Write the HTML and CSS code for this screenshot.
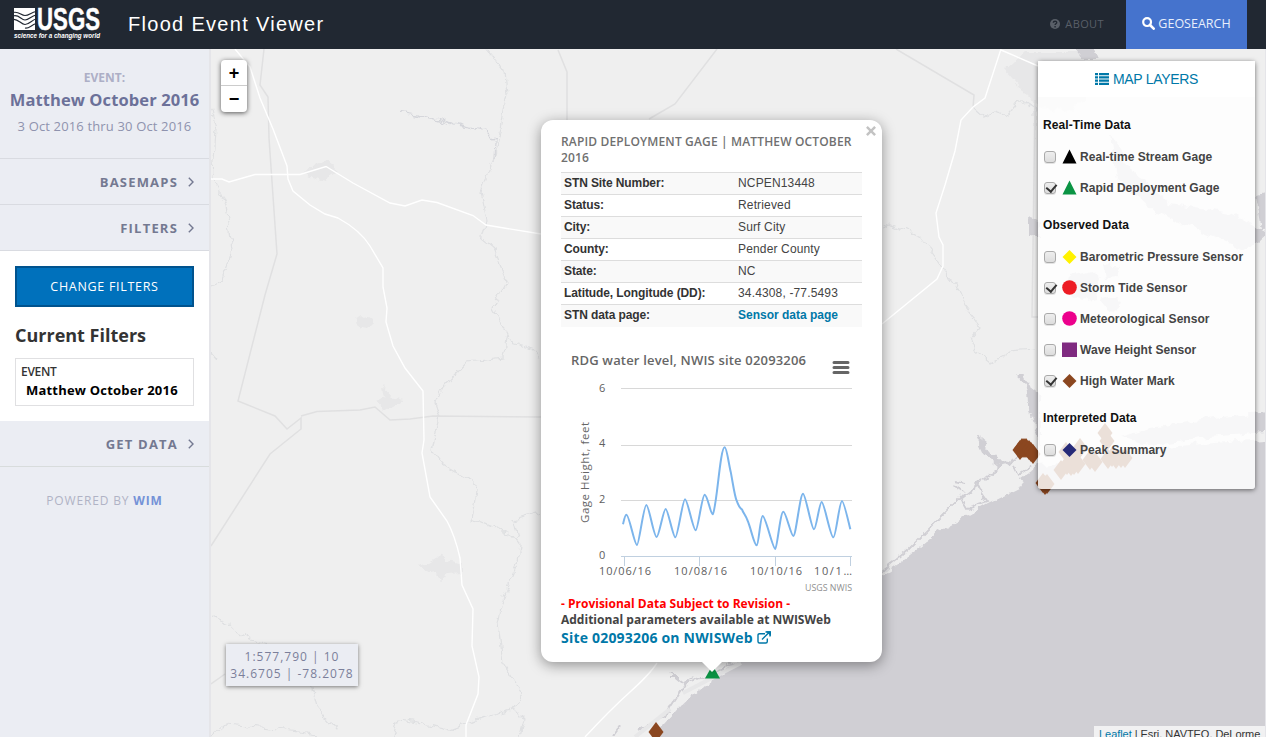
FILE: index.html
```html
<!DOCTYPE html>
<html lang="en">
<head>
<meta charset="utf-8">
<title>Flood Event Viewer</title>
<link rel="stylesheet" href="styles.css">
</head>
<body>
<header class="navbar">
  <svg class="logo" width="88" height="34" viewBox="0 0 88 34">
    <path class="logo-fill" d="M1 1h21v22H1z"/>
    <path class="logo-wave" d="M0 5.500c6-1.500 8 3 12 3s6-3 11-4M0 9c6-2 8 4 12 4s6-4 11-5M0 12.500c5-1 8 5 12 5s7-4.500 11-5.500M12 21c4 1 6-3 11-4.500"/>
    <text class="logo-name" x="24" y="23" textLength="63" lengthAdjust="spacingAndGlyphs">USGS</text>
    <text class="logo-tag" x="1" y="30.5" textLength="86" lengthAdjust="spacingAndGlyphs">science for a changing world</text>
  </svg>
  <h1 class="brand">Flood Event Viewer</h1>
  <nav class="nav">
    <a class="about"><svg width="10" height="10" viewBox="0 0 10 10"><circle cx="5" cy="5" r="5" fill="#595f68"/><path d="M3.3 3.8C3.4 1.6 6.8 1.7 6.7 3.7C6.6 4.8 5.2 4.8 5.1 6M5.1 7v1.4" fill="none" stroke="#212832" stroke-width="1.4"/></svg><span>ABOUT</span></a>
    <a class="geosearch"><svg width="13" height="13" viewBox="0 0 13 13"><circle cx="5.1" cy="5.1" r="3.9" fill="none" stroke="#fff" stroke-width="2.2"/><path d="M8 8l3.7 3.7" stroke="#fff" stroke-width="2.6" stroke-linecap="round"/></svg><span>GEOSEARCH</span></a>
  </nav>
</header>
<div class="main">
  <aside class="sidebar">
    <section class="event">
      <div class="event-label">EVENT:</div>
      <div class="event-name">Matthew October 2016</div>
      <div class="event-dates">3 Oct 2016 thru 30 Oct 2016</div>
    </section>
    <div class="menu-item"><span>BASEMAPS</span><svg width="6" height="10" viewBox="0 0 6 10"><path d="M.8.8L5 5 .8 9.2"/></svg></div>
    <div class="menu-item"><span>FILTERS</span><svg width="6" height="10" viewBox="0 0 6 10"><path d="M.8.8L5 5 .8 9.2"/></svg></div>
    <section class="filters">
      <button class="change">CHANGE FILTERS</button>
      <h2 class="current">Current Filters</h2>
      <div class="filter-box"><div class="filter-key">EVENT</div><div class="filter-value">Matthew October 2016</div></div>
    </section>
    <div class="menu-item last"><span>GET DATA</span><svg width="6" height="10" viewBox="0 0 6 10"><path d="M.8.8L5 5 .8 9.2"/></svg></div>
    <div class="powered">POWERED BY <b>WIM</b></div>
  </aside>
  <main class="map">
    <svg class="basemap" width="1054" height="688" viewBox="211 49 1054 688">
      <defs>
        <filter id="rough" x="-5%" y="-5%" width="110%" height="110%"><feTurbulence type="fractalNoise" baseFrequency=".09" numOctaves="3" seed="4"/><feDisplacementMap in="SourceGraphic" scale="10" xChannelSelector="R" yChannelSelector="G"/></filter>
        <path id="hwm" d="M0-10L7.500 0 0 10-7.500 0z"/>
      </defs>
      <g class="urban" filter="url(#rough)">
        <path d="M305 174l12-13 12 1 9 7 -9 6 -4 7 -15-5zM357 318l6-4 7 3 4 6 -7 7 -9-2zM376 402l8-4 -2-12 9 10 12 4 -11 6 -8 5zM417 565l12-3 12-7 8 5 13 4v10l-14 1 -8 5 -12-9zM1005 70l20-18h60v50l-20 10 -30-5 -15-20z"/>
      </g>
      <g class="river" filter="url(#rough)">
        <path d="M487 50L505 72 507 94 500 133 495 155 480 192 486 221 482 238 493 247 507 282 493 308 507 335 503 357 467 361 443 387 435 403 440 418 432 449 443 464 477 484 472 519 510 534 520 545 518 563 502 602 498 624 503 663 522 694 513 709"/>
        <path class="water-line" d="M400 112L440 120 455 126 485 130 495 140 494 158M401 113L420 115 445 122 482 131"/>
        <path d="M210 105L216 130 213 176 225 205 232 250 222 280 211 285M540 512L514 520 518 538M507 341L533 348 540 357M211 617L230 625 250 640 275 645M310 680L317 707 340 733M393 737L398 720 430 725 450 730 490 715 513 709 524 720 520 737M211 737L225 724 270 728 320 735"/>
        <path d="M882 228L890 223 920 236 936 258 945 272 955 285 965 307 980 327 970 338 975 350 990 362 1010 352 1035 350M975 110L983 117 995 112 1007 116 1020 100 1035 110 1035 140M211 352L218 360"/>
      </g>
      <g class="county">
        <path d="M264 49L260 85 268 97 269 138 277 254 265 295 238 401 275 416 287 429 301 418V429L270 454 211 546M301 416L317 411.500 360 410 375 407 390 420 410 419 433 416 541 417M558 50L567 72V120M717 49L675 104 649 119M896 49L974 95 973 108M1035 100L1032 317H1038M211 684L225 674"/>
      </g>
      <g class="road">
        <path d="M235 49L250 67 260 98 273 129 287 166 288 179 293 191 310 205 325 214 338 218Q360 230 370 246L383 268V287L387 308 386 322 393 346 405 368 423 391 424 440 422 453 Q427 480 430 497L447 521Q455 536 460 558L462 585 473 609 472 646 479 677 478 694 466 725V737"/>
        <path d="M211 179H222L229 182 255 174.500H300L326 166.500 353 183 390 203 405 206 422 200 437 202.500 473 215.500 486 225 541 234"/>
        <path d="M1001 49L985 98 973 107 961 120 955 151 945 185 936 213 939 237 943 245V266L937 279 882 324M1001 50L1038 66M585 737Q610 710 630 692T657 663"/>
      </g>
      <g filter="url(#rough)" class="water">
        <path d="M645 745L683 703 735 664 882 575 905 559 937 533 967 516 988 504 1023 487 1020 478 1039 465 1075 462 1130 450 1275 438V745z"/>
        <path d="M1016 375L1026 384 1030 405 1035 430 1040 445V395L1030 387 1024 375zM976 436L985 443 990 450 1003 464 1015 459 1009 466 999 467 985 455zM1120 437L1150 428 1200 420 1275 410V431L1200 438 1150 446zM1256 195L1275 190V229L1262 230zM1075 49H1095L1099 59H1083zM1028 218L1040 222 1039 237 1028 236z"/>
        <path d="M1070 275l20-5 10 8 -5 20 -12 3 -15-12zM1105 265l15 2 -3 10 -10 1zM1100 300l15-5 6 10 -10 8zM1110 135l25 40 35 28 60 10 36 20 -20 18 -90-38 -40-35z"/>
      </g>
      <g class="inlet" filter="url(#rough)">
        <path d="M882 571L908 550 960 498 1008 461 1037 449M959 495L967 509 988 502 979 489 981 480M953 485L963 492M955 481L965 483M1014 466L1018 474 1032 465M640 730L667 713 685 685 735 664M668 672L684 685 695 676M670 678L680 678M613 737L621 726"/>
      </g>
      <path class="beach" d="M635 737L670 709M683 693L741 663"/>
      <g class="marks">
        <use href="#hwm" x="1020" y="450"/><use href="#hwm" x="1022" y="448"/><use href="#hwm" x="1024" y="448"/><use href="#hwm" x="1026" y="448"/><use href="#hwm" x="1029" y="450"/><use href="#hwm" x="1031" y="452"/><use href="#hwm" x="1033" y="454"/>
        <use href="#hwm" x="1043" y="483"/><use href="#hwm" x="1045" y="485"/><use href="#hwm" x="1047" y="484"/>
        <use href="#hwm" x="1061" y="470"/><use href="#hwm" x="1066" y="452"/><use href="#hwm" x="1067" y="465"/><use href="#hwm" x="1071" y="466"/><use href="#hwm" x="1074" y="465"/><use href="#hwm" x="1078" y="464"/><use href="#hwm" x="1080" y="448"/><use href="#hwm" x="1072" y="456"/>
        <use href="#hwm" x="1090" y="460"/><use href="#hwm" x="1095" y="462"/><use href="#hwm" x="1105" y="433"/><use href="#hwm" x="1107" y="441"/><use href="#hwm" x="1108" y="459"/><use href="#hwm" x="1112" y="457"/><use href="#hwm" x="1116" y="459"/><use href="#hwm" x="1121" y="458"/><use href="#hwm" x="1125" y="458"/>
        <use href="#hwm" x="656" y="732"/>
      </g>
      <path fill="#0b9444" d="M712.500 665l7.500 13.500h-15z"/>
    </svg>
    <div class="zoom"><a>+</a><a>−</a></div>
    <div class="scale"><div>1:577,790 | 10</div><div>34.6705 | -78.2078</div></div>
    <div class="attribution"><a>Leaflet</a> | Esri, NAVTEQ, DeLorme</div>

    <section class="layers">
      <div class="layers-head"><svg width="14" height="12" viewBox="0 0 14 12"><path d="M0 0h3v2.200H0zM4 0h10v2.200H4zM0 3.200h3v2.300H0zM4 3.200h10v2.300H4zM0 6.500h3v2.300H0zM4 6.500h10v2.300H4zM0 9.800h3V12H0zM4 9.800h10V12H4z" fill="#0078a8"/></svg><span>MAP LAYERS</span></div>
      <h3>Real-Time Data</h3>
      <label><i class="check"></i><svg class="sym" viewBox="0 0 15 15"><path d="M7.500 .500L14.500 14.500H.500z"/></svg><span>Real-time Stream Gage</span></label>
      <label><i class="check on"></i><svg class="sym" viewBox="0 0 15 15"><path fill="#0b9444" d="M7.500 .500L14.500 14.500H.500z"/></svg><span>Rapid Deployment Gage</span></label>
      <h3>Observed Data</h3>
      <label><i class="check"></i><svg class="sym" viewBox="0 0 15 15"><path fill="#fff200" d="M7.500 1L14.500 8 7.500 15 .500 8z"/></svg><span>Barometric Pressure Sensor</span></label>
      <label><i class="check on"></i><svg class="sym" viewBox="0 0 15 15"><circle fill="#ed1c24" cx="7.500" cy="7.500" r="7.300"/></svg><span>Storm Tide Sensor</span></label>
      <label><i class="check"></i><svg class="sym" viewBox="0 0 15 15"><circle fill="#ec008c" cx="7.500" cy="7.500" r="7.300"/></svg><span>Meteorological Sensor</span></label>
      <label><i class="check"></i><svg class="sym" viewBox="0 0 15 15"><path fill="#7f2a80" d="M0 .500h15v14.500H0z"/></svg><span>Wave Height Sensor</span></label>
      <label><i class="check on"></i><svg class="sym" viewBox="0 0 15 15"><path fill="#8b4720" d="M7.500 1L14.500 8 7.500 15 .500 8z"/></svg><span>High Water Mark</span></label>
      <h3>Interpreted Data</h3>
      <label><i class="check"></i><svg class="sym" viewBox="0 0 15 15"><path fill="#262a78" d="M7.500 1L14.500 8 7.500 15 .500 8z"/></svg><span>Peak Summary</span></label>
    </section>

    <section class="popup">
      <svg class="close" width="10" height="10" viewBox="0 0 9 9"><path d="M.8.8l7.400 7.400M8.200 .8L.8 8.200" stroke="#c3c3c3" stroke-width="2.200"/></svg>
      <h4>RAPID DEPLOYMENT GAGE | MATTHEW OCTOBER 2016</h4>
      <table>
        <tr><th>STN Site Number:</th><td>NCPEN13448</td></tr>
        <tr><th>Status:</th><td>Retrieved</td></tr>
        <tr><th>City:</th><td>Surf City</td></tr>
        <tr><th>County:</th><td>Pender County</td></tr>
        <tr><th>State:</th><td>NC</td></tr>
        <tr><th>Latitude, Longitude (DD):</th><td>34.4308, -77.5493</td></tr>
        <tr><th>STN data page:</th><td><a>Sensor data page</a></td></tr>
      </table>
      <svg class="chart" width="301" height="269" viewBox="561 327 301 269">
        <text class="chart-title" x="571" y="365" textLength="235">RDG water level, NWIS site 02093206</text>
        <path d="M834 362.500h14M834 367.500h14M834 372.500h14" stroke="#666" stroke-width="3" stroke-linecap="round"/>
        <path d="M621 388.500h231M621 445.500h231M621 500.500h231" stroke="#d8d8d8"/>
        <path d="M621 556.500h231M624.500 556v10M699.500 556v10M775.500 556v10M850.500 556v10" stroke="#c0d0e0" fill="none"/>
        <g class="axis"><text x="599" y="392">6</text><text x="599" y="447">4</text><text x="599" y="503">2</text><text x="599" y="559">0</text>
        <text x="599" y="575" textLength="52">10/06/16</text><text x="674" y="575" textLength="53">10/08/16</text><text x="750" y="575" textLength="52">10/10/16</text><text x="814" y="575" textLength="38">10/1…</text></g>
        <text class="ytitle" transform="translate(589 523) rotate(-90)" textLength="101">Gage Height, feet</text>
        <text class="credit" x="805" y="591" textLength="47" lengthAdjust="spacingAndGlyphs">USGS NWIS</text>
        <path class="series" transform="translate(540 330) scale(.33333)" d="M249 583C252 570 255 554 259 554C268 554 283 645 291 645C297 645 311 525 319 525C327 525 341 621 350 621C357 621 370 537 377 537C384 537 399 622 406 622C413 622 428 508 435 508C443 508 459 601 467 601C474 601 486 494 494 494C502 494 512 553 518 553C530 540 540 352 554 352C560 352 566 400 572 425C578 455 584 500 590 512Q598 535 606 538C610 550 617 556 622 570C632 590 642 646 650 646C656 646 661 558 668 558C677 558 698 657 706 657C711 657 721 545 730 545C738 545 753 618 760 618C768 618 780 491 789 491C797 491 814 598 822 598C829 598 838 516 845 516C853 516 871 622 880 622C888 622 898 513 906 513Q911 513 931 598"/>
      </svg>
      <div class="prov">- Provisional Data Subject to Revision -</div>
      <div class="addl">Additional parameters available at NWISWeb</div>
      <a class="site"><span>Site 02093206 on NWISWeb</span><svg width="14" height="13" viewBox="0 0 14 13"><path d="M8 2.700H2.500Q1 2.700 1 4.200V10.500Q1 12 2.500 12H8.800Q10.300 12 10.300 10.500V7.500M5 8.500L12 1.500M8.500 1H13V5.500" fill="none" stroke="#0078a8" stroke-width="1.400"/><path d="M9 .300h5v5z" fill="#0078a8"/></svg></a>
      <div class="tip"></div>
    </section>
  </main>
</div>
</body>
</html>
```
FILE: styles.css
```css
* { box-sizing: border-box; }
body { margin: 0; height: 737px; overflow: hidden; display: flex; flex-direction: column; font-family: "Open Sans", sans-serif; }
svg { display: block; flex: none; }
h1, h2, h3, h4 { margin: 0; }

.navbar { height: 49px; flex: none; background: #212832; display: flex; align-items: center; padding-right: 19px; }
.logo { margin: 0 0 2px 13px; overflow: visible; }
.logo-fill { fill: #fff; }
.logo-wave { fill: none; stroke: #212832; stroke-width: 1.2; }
.logo-name { font: bold 31px "Liberation Sans", sans-serif; fill: #fff; stroke: #fff; stroke-width: .5px; }
.logo-tag { font: italic bold 8px "Liberation Sans", sans-serif; fill: #fff; }
.brand { margin-left: 27px; font: 20px "Liberation Sans", sans-serif; letter-spacing: 1.3px; color: #fff; white-space: nowrap; }
.nav { margin-left: auto; height: 100%; display: flex; font-size: 12px; }
.nav a { display: flex; align-items: center; gap: 5px; }
.nav .about { color: #595f68; padding-right: 22px; padding-bottom: 2px; font-size: 11px; letter-spacing: .4px; }
.nav .geosearch { width: 121px; justify-content: center; background: #4573cd; color: #e8effc; gap: 3px; padding-bottom: 2px; font-size: 12.500px; }

.main { display: flex; flex: 1; min-height: 0; }
.sidebar { width: 211px; flex: none; background: #ebedf3; border-right: 2px solid #e5e5e9; }
.event { height: 110px; border-bottom: 1px solid #d9dbe1; text-align: center; white-space: nowrap; padding-top: 20px; }
.event-label { font-size: 12px; line-height: 18px; font-weight: bold; color: #adafc6; }
.event-name { font-size: 16.500px; line-height: 25px; letter-spacing: .1px; font-weight: bold; color: #6c7199; }
.event-dates { font-size: 13px; line-height: 29px; letter-spacing: .15px; color: #8f93ae; }
.menu-item { height: 46px; border-bottom: 1px solid #d9dbe1; display: flex; align-items: center; justify-content: flex-end; gap: 10px; padding-right: 15px; color: #747991; font-size: 13px; font-weight: bold; letter-spacing: 1.2px; }
.menu-item path { fill: none; stroke: #747991; stroke-width: 1.4; }
.menu-item.last { border-bottom-color: #d8dcdc; }
.filters { height: 170px; background: #fff; padding: 15px; }
.change { display: block; width: 179px; height: 41px; border: 2px solid #00538e; background: #0071bc; color: #fff; font: 12.500px "Open Sans", sans-serif; letter-spacing: .7px; padding: 0; }
.current { font-size: 18px; line-height: 24px; color: #333; margin: 16px 0 11px; }
.filter-box { width: 179px; height: 48px; border: 1px solid #e0e0e2; padding: 4px 5px; white-space: nowrap; }
.filter-key { font-size: 12px; line-height: 18px; color: #333; font-weight: 600; letter-spacing: -.3px; }
.filter-value { font-size: 13px; line-height: 19px; letter-spacing: .2px; font-weight: bold; color: #000; padding-left: 5px; }
.powered { text-align: center; margin-top: 24px; font-size: 12px; line-height: 20px; color: #b0b3c5; letter-spacing: .85px; }
.powered b { color: #7492d7; }

.map { position: relative; flex: 1; background: #efefef; border-right: 1px solid #e5e5e9; overflow: hidden; }
.urban { fill: #e7e7e8; }
.river { fill: none; stroke: #dfe0e2; stroke-width: 1.2; }
.water-line { stroke: #d5d6db; }
.county { fill: none; stroke: #e0e0e1; stroke-width: 1.5; }
.road { fill: none; stroke: #fff; stroke-width: 1.4; }
.water { fill: #d0cfd4; }
.inlet { fill: none; stroke: #d0cfd4; stroke-width: 1.8; }
.beach { stroke: #e7e7e8; stroke-width: 4; }
.marks { fill: #8b4720; }

.zoom { position: absolute; left: 10px; top: 11px; width: 26px; border-radius: 4px; background: #fff; box-shadow: 0 1px 5px rgba(0,0,0,.65); }
.zoom a { display: block; height: 26px; text-align: center; font: bold 18px/26px "Liberation Sans", sans-serif; }
.zoom a:first-child { border-bottom: 1px solid #ccc; }
.scale { position: absolute; left: 15px; top: 595px; width: 132px; height: 42px; background: #ebedf3; box-shadow: 0 1px 4px rgba(0,0,0,.5); padding-top: 4px; text-align: center; font-size: 12px; line-height: 17px; letter-spacing: 1px; color: #7b7f9a; white-space: nowrap; }
.attribution { position: absolute; right: 0; top: 677px; width: 171px; height: 16px; padding: 0 5px; background: rgba(255,255,255,.7); font: 11px/16px "Liberation Sans", sans-serif; letter-spacing: -.05px; color: #333; white-space: nowrap; }
.attribution a { color: #0078a8; text-decoration: underline; }

.layers { position: absolute; left: 827px; top: 12px; width: 217px; height: 428px; border-radius: 3px; background: rgba(255,255,255,.83); box-shadow: 0 1px 5px rgba(0,0,0,.55); font-family: "Liberation Sans", sans-serif; }
.layers-head { height: 36px; background: #fff; display: flex; align-items: center; justify-content: center; gap: 4px; color: #0078a8; font-size: 14px; letter-spacing: -.3px; }
.layers h3 { font-size: 12px; line-height: 22px; letter-spacing: .1px; color: #111; padding-left: 5px; height: 22px; margin: 11px 0 0; }
.layers .layers-head + h3 { margin-top: 17px; }
.layers h3 + label { margin-top: 5px; }
.layers label { height: 31px; display: flex; align-items: center; padding-left: 6px; color: #444; font-size: 12px; font-weight: bold; letter-spacing: .04px; white-space: nowrap; }
.check { width: 12px; height: 12px; flex: none; border: 1px solid #aaa; border-radius: 3px; background: linear-gradient(#eee, #ddd); box-shadow: 0 1px 0 rgba(0,0,0,.1); position: relative; }
.check.on::after { content: ""; position: absolute; left: 3px; top: 0; width: 5px; height: 8px; border: solid #333; border-width: 0 2px 2px 0; transform: translateY(-1px) rotate(40deg); }
.sym { width: 15px; height: 15px; margin: 0 3px 0 6px; }

.popup { position: absolute; left: 330px; top: 71px; width: 341px; height: 542px; border-radius: 12px; background: #fff; box-shadow: 0 3px 14px rgba(0,0,0,.4); padding: 14px 20px; color: #444; }
.close { position: absolute; right: 6px; top: 6px; }
.popup h4 { font-size: 12px; line-height: 16px; font-weight: 600; letter-spacing: .15px; color: #707070; margin-bottom: 6px; }
.popup table { width: 301px; border-collapse: collapse; table-layout: fixed; font: 12px "Liberation Sans", sans-serif; color: #444; }
.popup tr { height: 22px; border-top: 1px solid #ddd; }
.popup tr:nth-child(odd) { background: #f9f9f9; }
.popup th, .popup td { padding: 0 3px 1px; text-align: left; white-space: nowrap; line-height: 20px; }
.popup th { width: 174px; color: #333; letter-spacing: -.1px; }
.popup td { letter-spacing: .15px; }
.popup td a { color: #0078a8; font-weight: bold; letter-spacing: 0; }
.chart { font-family: "Open Sans", sans-serif; }
.chart-title { font-size: 13px; font-weight: 600; fill: #666; }
.axis { font-size: 11px; fill: #606060; }
.ytitle { font-size: 11.500px; fill: #666; }
.credit { font-size: 9px; fill: #909090; }
.series { fill: none; stroke: #7cb5ec; stroke-width: 6; stroke-linejoin: round; }
.prov, .addl { font-size: 12px; line-height: 16px; font-weight: bold; white-space: nowrap; }
.prov { color: #f00; }
.site { display: flex; align-items: center; gap: 4px; color: #0078a8; font-size: 14px; line-height: 20px; letter-spacing: .2px; font-weight: bold; white-space: nowrap; }
.tip { position: absolute; left: 160px; top: 541px; width: 22px; height: 11px; background: #fff; clip-path: polygon(0 0, 100% 0, 50% 100%); }
```
